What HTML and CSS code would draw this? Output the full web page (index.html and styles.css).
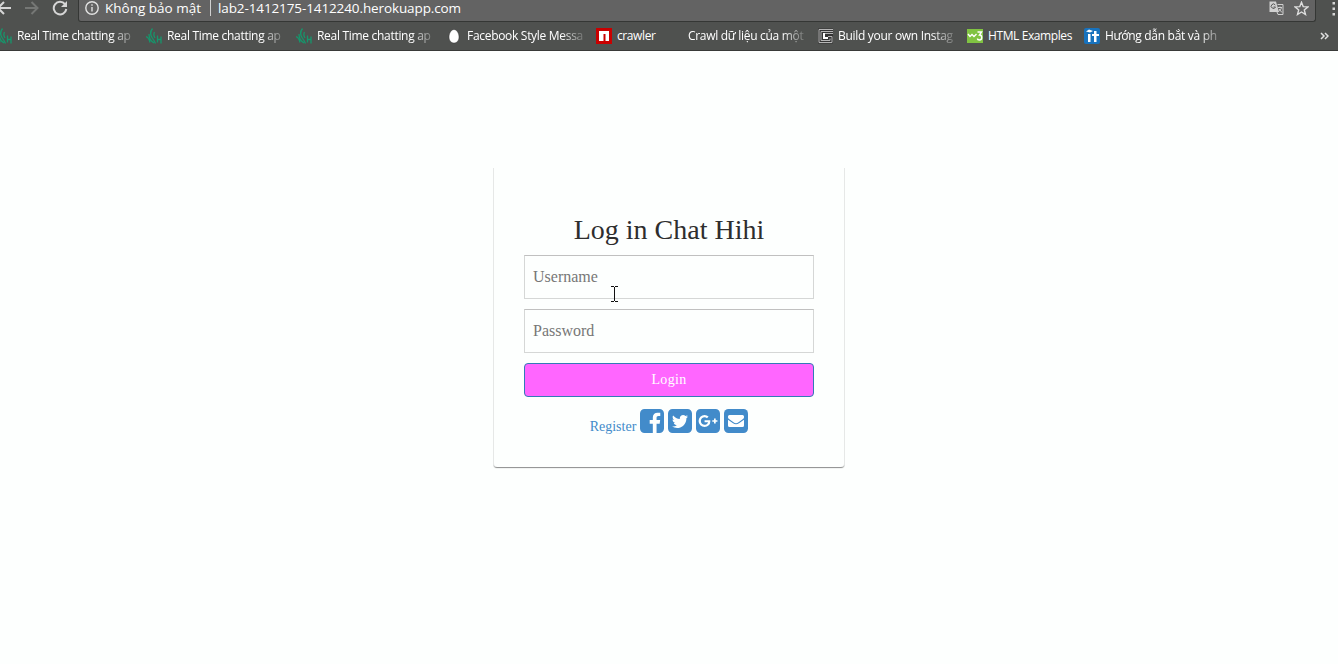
FILE: index.html
```
<!DOCTYPE html>
<html lang="vi">
<head>
<meta charset="utf-8">
<title>Log in Chat Hihi</title>
<link rel="stylesheet" href="styles.css">
</head>
<body>
<svg width="0" height="0" class="defs">
  <symbol id="coral" viewBox="0 0 16 16"><path d="M0 8.500q3 1 4 6M3 6q0 6 5 9M6.500.500Q3 5 6 9.500T9.500 15.500M8.500 4q-1.500 3 .5 6M11.500 7.500v7M15 8.500v7M11.500 11.500H15" fill="none" stroke="#16966c" stroke-width="1.300"/></symbol>
</svg>
<header class="chrome">
  <div class="toolbar">
    <svg class="nav back" width="16" height="16" viewBox="0 0 16 16"><path d="M15 8H2M8 2L2 8l6 6"/></svg>
    <svg class="nav forward" width="16" height="16" viewBox="0 0 16 16"><path d="M1 8h12M7.500 2l6 6-6 6"/></svg>
    <svg class="nav reload" width="16" height="16" viewBox="0 0 16 16"><path d="M13 4.200A6.300 6.300 0 1 0 14.300 9"/><path d="M15 1v6H9z" class="solid"/></svg>
    <div class="omnibox">
      <svg class="info" width="14" height="14" viewBox="0 0 14 14"><circle cx="7" cy="7" r="6.200"/><path d="M7 6v4.500M7 3.300v1.500"/></svg>
      <span class="secure">Không bảo mật</span>
      <span class="rule"></span>
      <span class="url">lab2-1412175-1412240.herokuapp.com</span>
      <svg class="translate" width="15" height="15" viewBox="0 0 15 15"><path d="M.5.500H7L10 11H.5z" fill="#d0d0d0"/><path d="M6.300 4A2.200 2.200 0 1 0 6.500 6H4.500" fill="none" stroke="#585858"/><path d="M8.500 3.500h5.500v10H9l-1-2.500" fill="none" stroke="#d0d0d0"/><path d="M9 6.500h4M11 5.500v1M12.500 6.500c-.5 2-1.500 3-3 4M10 8l3 3.500" fill="none" stroke="#d0d0d0"/></svg>
      <svg class="star" width="15" height="15" viewBox="0 0 15 15"><path d="M7.500 1.300l1.700 4.300 4.700.3-3.600 3 1.200 4.600-4-2.500-4 2.500 1.200-4.600-3.600-3 4.700-.3z"/></svg>
    </div>
    <svg class="more" width="4" height="16" viewBox="0 0 4 16"><path d="M.5 1h2.500v2.500H.5zM.5 6.500h2.500V9H.5zM.5 12h2.500v2.500H.5z"/></svg>
  </div>
  <nav class="bookmarks">
    <a class="mark"><svg><use href="#coral"/></svg><span class="fade">Real Time chatting ap</span></a>
    <a class="mark"><svg><use href="#coral"/></svg><span class="fade">Real Time chatting ap</span></a>
    <a class="mark"><svg><use href="#coral"/></svg><span class="fade">Real Time chatting ap</span></a>
    <a class="mark"><svg viewBox="0 0 16 16"><path d="M8 1.500c3 0 5 4 5 7.500S11 15 8 15s-5-2.500-5-6 2-7.500 5-7.500z" fill="#fff" stroke="#333" stroke-width=".5"/></svg><span class="fade">Facebook Style Messa</span></a>
    <a class="mark crawler"><svg viewBox="0 0 16 16"><path d="M0 0h16v16H0z" fill="#c90000"/><path d="M3 3h10v10H9.500V6h-2v7H3z" fill="#fff"/></svg><span>crawler</span></a>
    <a class="mark"><svg></svg><span class="fade">Crawl dữ liệu của một</span></a>
    <a class="mark"><svg viewBox="0 0 16 16"><path d="M1 .500h15v15H1z" fill="#343434"/><path d="M16 1.500H2v13h13V8.500h-4M16 3.500H4v9h9v-2M16 5.500H6" fill="none" stroke="#b5b5b5"/><path d="M7 5v5h4" fill="none" stroke="#fff" stroke-width="2"/></svg><span class="fade">Build your own Instag</span></a>
    <a class="mark html"><svg viewBox="0 0 16 16"><path d="M0 1h16v14H0z" fill="#80c342"/><path d="M1 6l2 2.500 2-2 2 2L9.500 6M10.500 4h4l-2 3c3 0 3 5 0 5-1 0-2-.5-2-1.500" fill="none" stroke="#fff" stroke-width="1.400"/></svg><span>HTML Examples</span></a>
    <a class="mark"><svg viewBox="0 0 16 16"><rect width="16" height="16" rx="2" fill="#1772bd"/><path d="M2 3.500l3-2 4 1.500-3 1.500zM4 6h2.500v8H4zM10 3h2.500v3H15v2h-2.500v6H10V8H8V6h2z" fill="#fff"/></svg><span class="fade">Hướng dẫn bắt và ph</span></a>
    <svg class="chevrons" viewBox="0 0 9 8"><path d="M1 1l3 3-3 3M5 1l3 3-3 3"/></svg>
  </nav>
</header>
<main class="page">
  <form class="card">
    <h1>Log in Chat Hihi</h1>
    <input type="text" placeholder="Username">
    <input type="password" placeholder="Password">
    <button type="button">Login</button>
    <div class="links">
      <a class="register">Register</a>
      <svg viewBox="128 128 1536 1536"><path d="M1376 128q119 0 203.500 84.500t84.500 203.500v960q0 119-84.500 203.500t-203.500 84.500h-188v-595h199l30-232h-229v-148q0-56 23.500-84t91.500-28l122-1v-207q-63-9-178-9-136 0-217.500 80t-81.500 226v171h-200v232h200v595h-532q-119 0-203.500-84.500t-84.500-203.500v-960q0-119 84.500-203.500t203.500-84.500h960z"/></svg>
      <svg viewBox="128 128 1536 1536"><path d="M1408 610q-56 25-121 34 68-40 93-117-65 38-134 51-61-66-153-66-87 0-148.500 61.500t-61.500 148.500q0 29 5 48-129-7-242-65t-192-155q-29 50-29 106 0 114 91 175-47-1-100-26v2q0 75 50 133.500t123 72.500q-29 8-51 8-13 0-39-4 21 63 74.500 104t121.500 42q-116 90-261 90-26 0-50-3 148 94 322 94 112 0 210-35.500t168-95 120.500-137 75-162 24.500-168.500q0-18-1-27 63-45 105-109zm256-194v960q0 119-84.500 203.500t-203.500 84.500h-960q-119 0-203.500-84.500t-84.500-203.500v-960q0-119 84.500-203.500t203.500-84.500h960q119 0 203.500 84.500t84.500 203.500z"/></svg>
      <svg viewBox="128 128 1536 1536"><path d="M1045 905q0-26-6-64h-362v132h217q-3 24-16.500 50t-37.500 53-66.500 44.500-96.500 17.500q-99 0-169-71t-70-171 70-171 169-71q92 0 153 59l104-101q-108-100-257-100-160 0-272 112.500t-112 271.500 112 271.500 272 112.500q165 0 266.500-105t101.500-270zm345 46h109v-110h-109v-110h-110v110h-110v110h110v110h110v-110zm274-535v960q0 119-84.500 203.500t-203.500 84.500h-960q-119 0-203.500-84.500t-84.500-203.500v-960q0-119 84.500-203.500t203.500-84.500h960q119 0 203.500 84.500t84.500 203.500z"/></svg>
      <svg viewBox="0 0 24 24"><rect width="24" height="24" rx="4.500"/><path d="M4 8.200V7.500Q4 6 5.500 6h13Q20 6 20 7.500v.7q0 1-1 1.800l-4.500 3.300Q12 15 9.500 13.300L5 10q-1-.8-1-1.800zM4 10.700l5 3.600q3 2 6 0l5-3.600v5.800q0 1.500-1.500 1.500h-13Q4 18 4 16.500z" fill="#fff"/></svg>
    </div>
  </form>
  <svg class="cursor" viewBox="0 0 7 16"><path d="M0 .500h3M4 .500h3M3.500 1v14M0 15.500h3M4 15.500h3"/></svg>
</main>
</body>
</html>
```
FILE: styles.css
```
* { box-sizing: border-box; }
body { margin: 0; height: 664px; overflow: hidden; background: #fdfffe; font-family: "Liberation Serif", "Times New Roman", serif; }
.defs { display: block; }
.chrome { height: 51px; background: #4f514f; border-bottom: 1px solid #383a38; color: #fff; font-family: "Open Sans", "Noto Sans", sans-serif; overflow: hidden; }
.toolbar { display: flex; height: 22px; }
.nav { flex: none; fill: none; stroke: #d6d6d6; stroke-width: 2; }
.nav .solid { fill: #d6d6d6; stroke: none; }
.back { margin-left: -4px; }
.forward { margin-left: 12px; stroke: #757775; }
.reload { margin-left: 12px; }
.omnibox { display: flex; width: 1238px; height: 22px; margin-left: 10px; padding-left: 6px; background: #636363; border: 1px solid #353735; border-top: 0; border-radius: 0 0 3px 3px; }
.omnibox span { white-space: nowrap; line-height: 17px; font-size: 13.500px; }
.info { margin-top: 1px; flex: none; fill: none; stroke: #e2e2e2; stroke-width: 1.400; }
.secure { width: 99px; margin-left: 6px; }
.omnibox .rule { width: 1px; height: 16px; margin-left: 6px; background: #d0d0d0; }
.omnibox .url { width: 1051px; margin-left: 7px; letter-spacing: -.11px; }
.translate { flex: none; margin-top: 1px; }
.star { flex: none; margin: 1px 0 0 10px; fill: none; stroke: #dedede; stroke-width: 1.400; }
.more { margin: 1px 0 0 16px; fill: #d5d5d5; }
.bookmarks { display: flex; height: 28px; margin-left: -4px; align-items: center; }
.mark { display: flex; flex: none; width: 150px; height: 16px; align-items: center; font-size: 12px; line-height: 16px; letter-spacing: -.3px; white-space: nowrap; }
.mark svg { width: 16px; height: 16px; flex: none; margin-right: 5px; }
.mark .fade { width: 117px; mask-image: linear-gradient(90deg, #000 94px, rgba(0,0,0,.2) 116px); }
.mark.crawler { width: 71px; letter-spacing: -.4px; }
.mark.html { width: 117px; letter-spacing: -.4px; }
.chevrons { width: 9px; height: 8px; margin-left: 86px; fill: none; stroke: #e0e0e0; stroke-width: 1.500; }
.page { position: relative; height: 613px; padding-top: 117px; }
.card { width: 352px; height: 299px; margin: 0 auto; padding: 45px 30px 0; border: solid #e6e8e7; border-width: 0 1px; border-radius: 0 0 4px 4px; background: #fdfffe; box-shadow: 0 2px 1px -1px rgba(0,0,0,.35), 0 1px 1px rgba(0,0,0,.15); clip-path: inset(0 0 -6px 0); }
h1 { margin: 0 0 10px; height: 32px; font-size: 28px; line-height: 34px; font-weight: 400; color: #2e2e2e; text-align: center; white-space: nowrap; }
input { display: block; width: 290px; height: 44px; margin: 0 0 10px; padding: 0 8px; border: 1px solid #d5d7d6; border-top-color: #c0c0c0; background: #fdfffe; font: 16px "Liberation Serif", serif; }
input::placeholder { color: #777; }
button { display: block; width: 290px; height: 34px; margin: 0; padding: 0; border: 1px solid #337ab7; border-radius: 4px; background: #ff66ff; color: #fff; font: 14px "Liberation Serif", serif; letter-spacing: .3px; }
.links { display: flex; justify-content: center; gap: 4px; height: 36px; padding-top: 12px; }
.links svg { width: 24px; height: 24px; fill: #428bca; }
.register { color: #428bca; font-size: 14px; line-height: 16px; margin-top: 10px; }
.cursor { position: absolute; left: 611px; top: 235px; width: 7px; height: 16px; fill: none; stroke: #111; stroke-width: 1; }
```
